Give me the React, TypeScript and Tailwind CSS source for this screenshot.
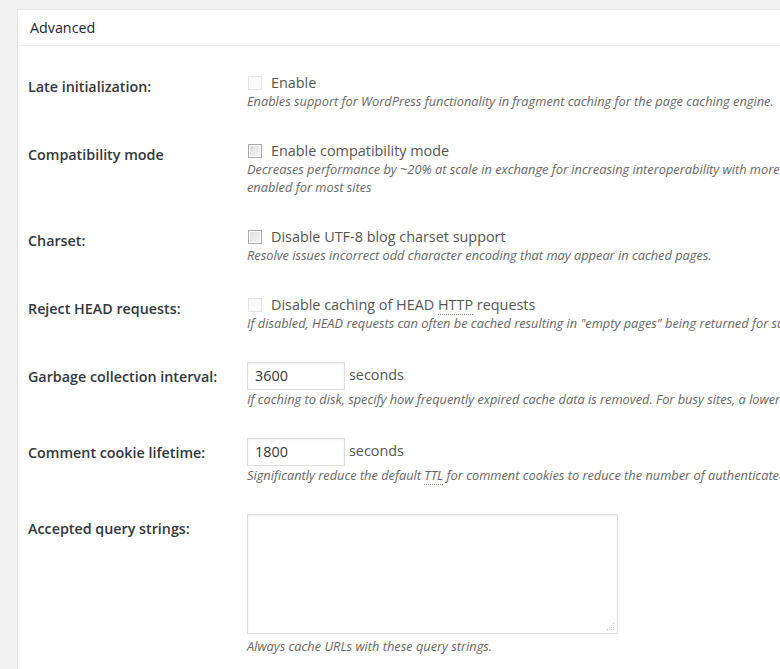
const font = { fontFamily: '"Open Sans", "Noto Sans", sans-serif' };

function Checkbox({ disabled }: { disabled?: boolean }) {
  return (
    <span
      className={
        disabled
          ? "inline-block w-[14px] h-[14px] border border-[#e2e4e7] bg-[#fafafa] shrink-0"
          : "inline-block w-[14px] h-[14px] border border-[#a7aaad] bg-gradient-to-br from-[#dcdcdc] to-[#f6f6f6] shadow-[inset_0_0_0_1px_#fff] shrink-0"
      }
    />
  );
}

function Desc({ children, nowrap = true }: { children: React.ReactNode; nowrap?: boolean }) {
  return (
    <p
      className={
        "text-[12.8px] leading-[18px] italic text-[#666] " + (nowrap ? "whitespace-nowrap" : "")
      }
    >
      {children}
    </p>
  );
}

function Row({ label, children }: { label: string; children: React.ReactNode }) {
  return (
    <div className="flex">
      <div className="w-[219px] shrink-0 pl-[10px] pr-[10px] pt-[21px] pb-[20px] text-[14.3px] leading-[18px] font-semibold text-[#32373c]">
        {label}
      </div>
      <div className="flex-1 py-[15px] px-[10px]">{children}</div>
    </div>
  );
}

function CheckLine({ disabled, children }: { disabled?: boolean; children: React.ReactNode }) {
  return (
    <div className="flex items-center h-[20px] pl-[1px] mt-[1px] -mb-[1px]">
      <Checkbox disabled={disabled} />
      <span className="ml-[9px] text-[14.4px] text-[#555]">{children}</span>
    </div>
  );
}

function NumberField({ value }: { value: string }) {
  return (
    <div className="flex items-center">
      <div className="w-[98px] h-[28px] border border-[#ddd] shadow-[inset_0_1px_2px_rgba(0,0,0,0.07)] flex items-center px-[7px] text-[14.4px] text-[#32373c]">
        {value}
      </div>
      <span className="ml-[4px] -mt-[3px] text-[14.4px] text-[#555]">seconds</span>
    </div>
  );
}

export default function App() {
  return (
    <div className="h-screen w-full overflow-hidden bg-[#f1f1f1] pt-[9px] pl-[17px]" style={font}>
      <div className="w-[1100px] bg-white border-l border-t border-[#e5e5e5]">
        <div className="h-[36px] border-b border-[#eee] flex items-center pl-[12px] text-[14.3px] text-[#23282d]">
          Advanced
        </div>
        <div className="pt-[11px]">
          <Row label="Late initialization:">
            <CheckLine disabled>Enable</CheckLine>
            <Desc>Enables support for WordPress functionality in fragment caching for the page caching engine.</Desc>
          </Row>
          <Row label="Compatibility mode">
            <CheckLine>Enable compatibility mode</CheckLine>
            <Desc>
              Decreases performance by ~20% at scale in exchange for increasing interoperability with more hosting
              environments and WordPress idioms. This option should be
              <br />
              enabled for most sites
            </Desc>
          </Row>
          <Row label="Charset:">
            <CheckLine>Disable UTF-8 blog charset support</CheckLine>
            <Desc>Resolve issues incorrect odd character encoding that may appear in cached pages.</Desc>
          </Row>
          <Row label="Reject HEAD requests:">
            <CheckLine disabled>
              Disable caching of HEAD{" "}
              <abbr className="no-underline border-b border-dotted border-[#888]">HTTP</abbr> requests
            </CheckLine>
            <Desc>
              If disabled, HEAD requests can often be cached resulting in "empty pages" being returned for subsequent
              requests for a URL.
            </Desc>
          </Row>
          <Row label="Garbage collection interval:">
            <NumberField value="3600" />
            <Desc>
              If caching to disk, specify how frequently expired cache data is removed. For busy sites, a lower value is
              best.
            </Desc>
          </Row>
          <Row label="Comment cookie lifetime:">
            <NumberField value="1800" />
            <Desc>
              Significantly reduce the default{" "}
              <abbr className="no-underline border-b border-dotted border-[#888]">TTL</abbr> for comment cookies to
              reduce the number of authenticated user traffic.
            </Desc>
          </Row>
          <Row label="Accepted query strings:">
            <div className="relative w-[371px] h-[120px] border border-[#ddd] shadow-[inset_0_1px_2px_rgba(0,0,0,0.07)]">
              <svg className="absolute right-[2px] bottom-[2px]" width="8" height="8" viewBox="0 0 8 8">
                <g fill="#c8c8c8">
                  <rect x="6" y="0" width="1" height="1" />
                  <rect x="4" y="2" width="1" height="1" />
                  <rect x="6" y="2" width="1" height="1" />
                  <rect x="2" y="4" width="1" height="1" />
                  <rect x="4" y="4" width="1" height="1" />
                  <rect x="6" y="4" width="1" height="1" />
                  <rect x="0" y="6" width="1" height="1" />
                  <rect x="2" y="6" width="1" height="1" />
                  <rect x="4" y="6" width="1" height="1" />
                  <rect x="6" y="6" width="1" height="1" />
                </g>
              </svg>
            </div>
            <div className="pt-[3px]">
              <Desc>Always cache URLs with these query strings.</Desc>
            </div>
          </Row>
        </div>
      </div>
    </div>
  );
}
